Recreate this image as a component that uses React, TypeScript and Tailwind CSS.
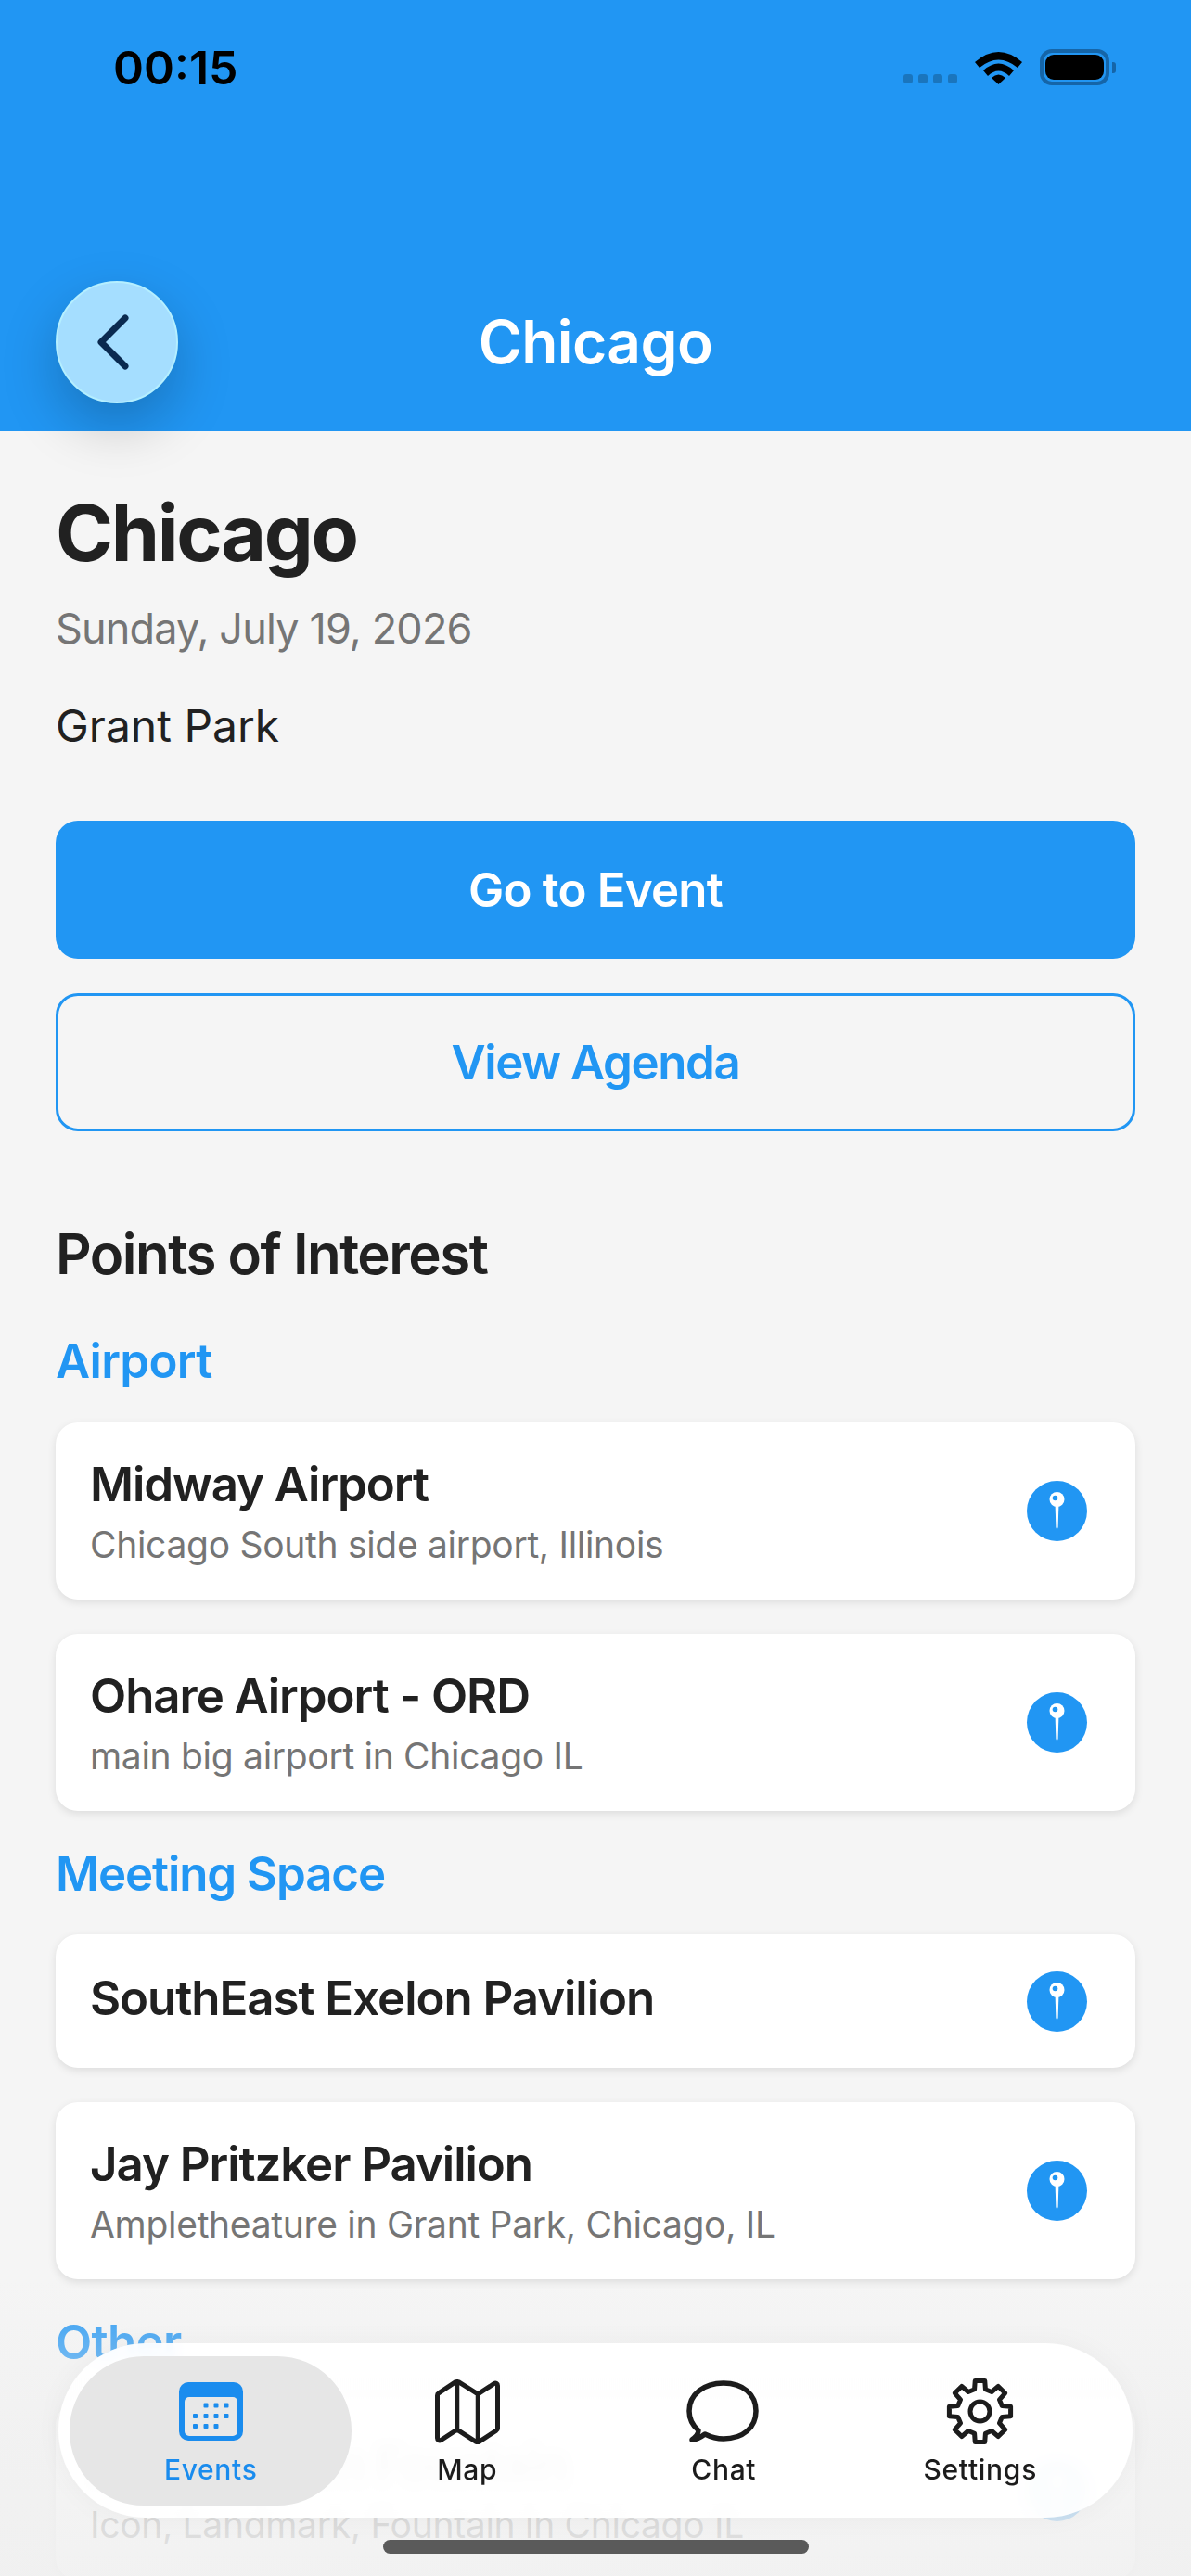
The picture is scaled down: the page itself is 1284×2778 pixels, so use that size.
import React from 'react';
import { IoMapOutline } from 'react-icons/io5';

interface Poi {
    title: string;
    subtitle?: string;
}

const airports: Poi[] = [
    { title: 'Midway Airport', subtitle: 'Chicago South side airport, Illinois' },
    { title: 'Ohare Airport - ORD', subtitle: 'main big airport in Chicago IL' },
];

const meetingSpaces: Poi[] = [
    { title: 'SouthEast Exelon Pavilion' },
    { title: 'Jay Pritzker Pavilion', subtitle: 'Ampletheature in Grant Park, Chicago, IL' },
];

const others: Poi[] = [
    { title: 'Buckingham Fountain', subtitle: 'Icon, Landmark, Fountain in Chicago IL' },
];

// eight tooth outline for the settings tab
function gearPath() {
    const c = 38.5;
    const pt = (r: number, deg: number) => {
        const a = (deg * Math.PI) / 180;
        return `${(c + r * Math.cos(a)).toFixed(2)} ${(c + r * Math.sin(a)).toFixed(2)}`;
    };
    let d = '';
    for (let i = 0; i < 8; i++) {
        const a = i * 45 - 90;
        d += `${i === 0 ? 'M' : 'L'}${pt(24.5, a - 14)} L${pt(33.5, a - 9)} L${pt(33.5, a + 9)} L${pt(24.5, a + 14)} `;
    }
    return d + 'Z';
}

function PinBadge() {
    return (
        <div className="flex h-[65px] w-[65px] shrink-0 items-center justify-center rounded-full bg-[#2196f3]">
            <svg width="65" height="65" viewBox="0 0 65 65">
                <path d="M30.5 24 L34.5 24 L33.6 50 Q32.5 54 31.4 50 Z" fill="#fff" />
                <circle cx="32.5" cy="20" r="8" fill="#fff" />
                <circle cx="30.5" cy="18.5" r="2.8" fill="#2196f3" />
            </svg>
        </div>
    );
}

function PoiCard({ poi }: { poi: Poi }) {
    return (
        <div className={`flex items-center justify-between rounded-[24px] bg-white pl-[37px] pr-[52px] shadow-[0_3px_10px_rgba(0,0,0,0.1)] ${poi.subtitle ? 'h-[191px]' : 'h-[144px]'}`}>
            <div className={`min-w-0 ${poi.subtitle ? '' : 'pb-[6px]'}`}>
                <div className="text-[51px] font-semibold leading-[62px] tracking-[-1.05px] text-[#212121]">{poi.title}</div>
                {poi.subtitle && <div className="mt-[10px] text-[39px] leading-[48px] tracking-[-0.3px] text-[#757575]">{poi.subtitle}</div>}
            </div>
            <PinBadge />
        </div>
    );
}

function TabLabel({ label, active }: { label: string; active?: boolean }) {
    return (
        <span className={`relative mt-[5px] text-[30px] font-medium leading-[38px] tracking-[0.7px] ${active ? 'text-[#1a8cee]' : 'text-[#1c1c1c]'}`}>
            {label}
        </span>
    );
}

function CalendarIcon() {
    return (
        <svg width="69" height="63" viewBox="0 0 69 63">
            <rect width="69" height="63" rx="10" fill="#1a8cee" />
            <rect x="6" y="16" width="57" height="42" rx="5" fill="#e8e8e8" />
            {[[29, 25], [40, 25], [51, 25], [17.5, 36.5], [29, 36.5], [40, 36.5], [51, 36.5], [17.5, 47.5], [29, 47.5], [40, 47.5]].map(([x, y]) => (
                <rect key={`${x}-${y}`} x={x - 2.5} y={y - 2.5} width="5" height="5" rx="1" fill="#1a8cee" />
            ))}
        </svg>
    );
}

function ChatIcon() {
    return (
        <svg width="80" height="70" viewBox="0 0 80 70" fill="none">
            <path
                d="M40 4 C61 4 75 16 75 34 C75 52 61 64 40 64 C32 64 26 62 20 59 C16 62 11 65 6 65 C10 62 13 59 13 55 C7 50 3 43 3 34 C3 16 19 4 40 4 Z"
                stroke="#1c1c1c"
                strokeWidth="5.5"
                strokeLinejoin="round"
            />
        </svg>
    );
}

function GearIcon() {
    return (
        <svg width="77" height="77" viewBox="0 0 77 77" fill="none">
            <path d={gearPath()} stroke="#1c1c1c" strokeWidth="5" strokeLinejoin="round" />
            <circle cx="38.5" cy="38.5" r="10.5" stroke="#1c1c1c" strokeWidth="5" />
        </svg>
    );
}

function TabBar() {
    return (
        <div className="absolute left-[63px] top-[2527px] flex h-[188px] w-[1158px] rounded-[94px] bg-white/[0.93] px-[26px] shadow-[0_0_30px_rgba(0,0,0,0.04)] backdrop-blur-[6px]">
            <div className="relative flex flex-1 flex-col items-center pt-[35px]">
                <div className="absolute -left-[14px] -right-[13px] top-[14px] h-[161px] rounded-[80px] bg-[#e6e6e6]" />
                <div className="relative flex h-[77px] items-center"><CalendarIcon /></div>
                <TabLabel label="Events" active />
            </div>
            <div className="flex flex-1 flex-col items-center pt-[35px]">
                <div className="flex h-[77px] items-center"><IoMapOutline className="h-[80px] w-[80px] text-[#1c1c1c]" /></div>
                <TabLabel label="Map" />
            </div>
            <div className="flex flex-1 flex-col items-center pt-[35px]">
                <div className="flex h-[77px] items-center"><ChatIcon /></div>
                <TabLabel label="Chat" />
            </div>
            <div className="flex flex-1 flex-col items-center pt-[35px]">
                <div className="flex h-[77px] items-center"><GearIcon /></div>
                <TabLabel label="Settings" />
            </div>
        </div>
    );
}

function StatusIcons() {
    return (
        <div className="flex items-end">
            <div className="mb-[2px] flex gap-[6px]">
                <span className="h-[10px] w-[10px] rounded-[3px] bg-[#1a75bd]" />
                <span className="h-[10px] w-[10px] rounded-[3px] bg-[#1a75bd]" />
                <span className="h-[10px] w-[10px] rounded-[3px] bg-[#1a75bd]" />
                <span className="h-[10px] w-[10px] rounded-[3px] bg-[#1a75bd]" />
            </div>
            <svg width="51" height="38" viewBox="0 0 51 38" className="mb-[1px] ml-[19px]">
                <path d="M0 14 Q25.5 -8 51 14 L46 20 Q25.5 3 5 20 Z" fill="#000" />
                <path d="M9 23 Q25.5 8 42 23 L37 29 Q25.5 18 14 29 Z" fill="#000" />
                <path d="M18 31 Q25.5 24 33 31 L25.5 38 Z" fill="#000" />
            </svg>
            <div className="relative ml-[19px] flex h-[39px] w-[75px] items-center justify-center rounded-[13px] border-[4px] border-[#1565a8]">
                <div className="h-[27px] w-[63px] rounded-[9px] bg-black" />
                <div className="absolute -right-[11px] top-[10px] h-[12px] w-[4px] rounded-r-[3px] bg-[#1565a8]" />
            </div>
        </div>
    );
}

export default function App() {
    return (
        <div className="relative h-[2778px] w-[1284px] overflow-hidden bg-[#f5f5f5] font-['Inter',sans-serif]">
            <header className="relative h-[465px] bg-[#2196f3]">
                <div className="flex items-start justify-between pl-[122px] pr-[88px] pt-[43px]">
                    <span className="text-[50px] font-semibold leading-[60px] text-black">00:15</span>
                    <div className="pt-[10px]"><StatusIcons /></div>
                </div>
                <div className="absolute inset-x-0 top-[303px] flex h-[132px] items-center justify-center">
                    <span className="text-[64px] font-semibold tracking-[-0.6px] text-white">Chicago</span>
                </div>
            </header>

            <button className="absolute left-[60px] top-[303px] z-10 flex h-[132px] w-[132px] items-center justify-center rounded-full border-2 border-[#b5efff] bg-[#a5deff] shadow-[0_24px_60px_rgba(0,0,0,0.22)]">
                <svg width="40" height="64" viewBox="0 0 40 64" fill="none" className="-translate-x-[4px]">
                    <path d="M33 6 L7 32 L33 58" stroke="#0a2a50" strokeWidth="7" strokeLinecap="round" strokeLinejoin="round" />
                </svg>
            </button>

            <main className="px-[60px]">
                <h1 className="mt-[52px] text-[84px] font-bold leading-[116px] tracking-[-2.3px] text-[#212121]">Chicago</h1>
                <p className="mt-[17px] text-[45px] leading-[56px] tracking-[-0.85px] text-[#757575]">Sunday, July 19, 2026</p>
                <p className="mt-[48px] text-[48px] leading-[58px] text-[#212121]">Grant Park</p>

                <button className="mt-[73px] flex h-[149px] w-full items-center justify-center rounded-[24px] bg-[#2196f3] pt-[2px] text-[51px] font-semibold tracking-[-0.8px] text-white">Go to Event</button>
                <button className="mt-[37px] flex h-[149px] w-full items-center justify-center rounded-[24px] border-[3px] border-[#2196f3] pt-[2px] text-[51px] font-semibold tracking-[-1.4px] text-[#2196f3]">View Agenda</button>

                <h2 className="mt-[96px] text-[60px] font-semibold leading-[72px] tracking-[-1.5px] text-[#212121]">Points of Interest</h2>

                <h3 className="mt-[49px] text-[51px] font-semibold leading-[62px] tracking-[-0.7px] text-[#2196f3]">Airport</h3>
                <div className="mt-[35px] flex flex-col gap-[37px]">
                    {airports.map((poi) => <PoiCard key={poi.title} poi={poi} />)}
                </div>

                <h3 className="mt-[37px] text-[51px] font-semibold leading-[62px] tracking-[-1.1px] text-[#2196f3]">Meeting Space</h3>
                <div className="mt-[34px] flex flex-col gap-[37px]">
                    {meetingSpaces.map((poi) => <PoiCard key={poi.title} poi={poi} />)}
                </div>

                <h3 className="mt-[37px] text-[51px] font-semibold leading-[62px] tracking-[-0.7px] text-[#2196f3]">Other</h3>
                <div className="mt-[34px] flex flex-col gap-[37px]">
                    {others.map((poi) => <PoiCard key={poi.title} poi={poi} />)}
                </div>
            </main>

            {/* content fades out toward the bottom of the screen */}
            <div className="absolute inset-x-0 bottom-0 h-[320px] bg-linear-to-b from-[#f0f0f0]/0 via-[#f0f0f0]/70 to-[#f0f0f0]/90" />

            <TabBar />
            <div className="absolute left-[413px] top-[2739px] h-[15px] w-[459px] rounded-full bg-[#5a5a5a]" />
        </div>
    );
}
